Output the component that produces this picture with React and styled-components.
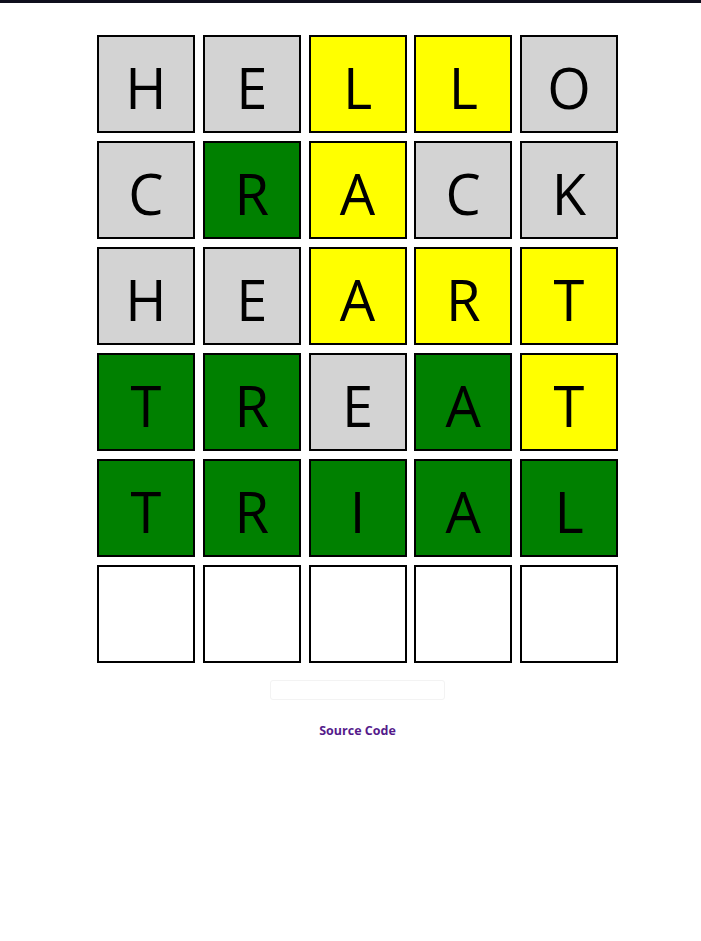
import React from "react";
import styled, { createGlobalStyle } from "styled-components";

const Global = createGlobalStyle`
  html, body { margin: 0; padding: 0; background: #fff; }
  body { font-family: "Open Sans", "Noto Sans", sans-serif; }
`;

const TopBar = styled.div`
  height: 3px;
  background: #0e0e1c;
`;

const Page = styled.div`
  display: flex;
  flex-direction: column;
  align-items: center;
  padding-left: 14px;
  padding-top: 32px;
`;

const Board = styled.div`
  display: grid;
  grid-template-columns: repeat(5, 98px);
  grid-auto-rows: 98px;
  column-gap: 7.75px;
  row-gap: 8px;
`;

const COLORS = {
  gray: "#d3d3d3",
  yellow: "#ffff00",
  green: "#008000",
  empty: "#ffffff",
};

const Tile = styled.div`
  box-sizing: border-box;
  border: 2px solid #000;
  background: ${(p) => COLORS[p.$state]};
  display: flex;
  align-items: center;
  justify-content: center;
  font-family: "Open Sans", "Noto Sans", sans-serif;
  font-size: 56px;
  color: #000;
  line-height: 1;
  padding-top: 6px;
`;

const Input = styled.input`
  box-sizing: border-box;
  margin-top: 17px;
  width: 175px;
  height: 20px;
  border: 1px solid #f3f3f3;
  border-radius: 3px;
  outline: none;
  background: #fff;
`;

const SourceLink = styled.a`
  margin-top: 22px;
  font-family: "Open Sans", "Noto Sans", sans-serif;
  font-weight: 700;
  font-size: 12.5px;
  color: #551a8b;
  text-decoration: none;
`;

const rows = [
  [["H", "gray"], ["E", "gray"], ["L", "yellow"], ["L", "yellow"], ["O", "gray"]],
  [["C", "gray"], ["R", "green"], ["A", "yellow"], ["C", "gray"], ["K", "gray"]],
  [["H", "gray"], ["E", "gray"], ["A", "yellow"], ["R", "yellow"], ["T", "yellow"]],
  [["T", "green"], ["R", "green"], ["E", "gray"], ["A", "green"], ["T", "yellow"]],
  [["T", "green"], ["R", "green"], ["I", "green"], ["A", "green"], ["L", "green"]],
  [["", "empty"], ["", "empty"], ["", "empty"], ["", "empty"], ["", "empty"]],
];

export default function App() {
  return (
    <>
      <Global />
      <TopBar />
      <Page>
        <Board>
          {rows.flatMap((row, r) =>
            row.map(([ch, st], c) => (
              <Tile key={`${r}-${c}`} $state={st}>
                {ch}
              </Tile>
            ))
          )}
        </Board>
        <Input type="text" />
        <SourceLink href="#">Source Code</SourceLink>
      </Page>
    </>
  );
}
